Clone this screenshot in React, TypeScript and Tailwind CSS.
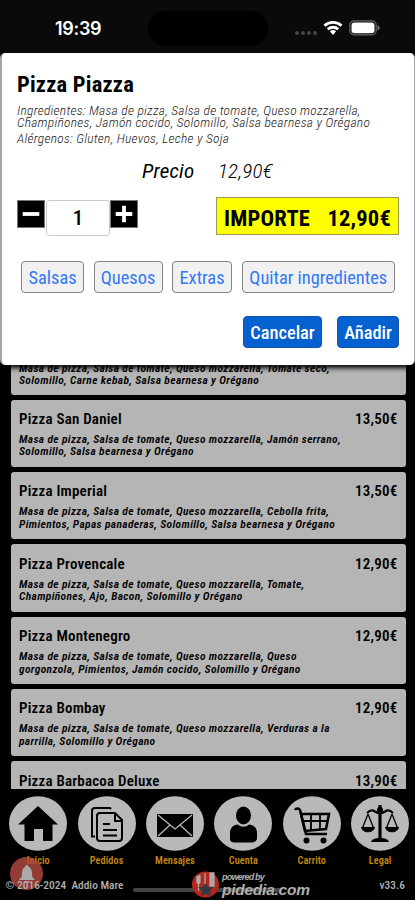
import type { ReactNode } from "react";
import clsx from "clsx";

type Pizza = { name: string; price: string; lines: string[] };

const pizzas: Pizza[] = [
  {
    name: "Pizza San Daniel",
    price: "13,50€",
    lines: ["Masa de pizza, Salsa de tomate, Queso mozzarella, Jamón serrano,", "Solomillo, Salsa bearnesa y Orégano"],
  },
  {
    name: "Pizza Imperial",
    price: "13,50€",
    lines: ["Masa de pizza, Salsa de tomate, Queso mozzarella, Cebolla frita,", "Pimientos, Papas panaderas, Solomillo, Salsa bearnesa y Orégano"],
  },
  {
    name: "Pizza Provencale",
    price: "12,90€",
    lines: ["Masa de pizza, Salsa de tomate, Queso mozzarella, Tomate,", "Champiñones, Ajo, Bacon, Solomillo y Orégano"],
  },
  {
    name: "Pizza Montenegro",
    price: "12,90€",
    lines: ["Masa de pizza, Salsa de tomate, Queso mozzarella, Queso", "gorgonzola, Pimientos, Jamón cocido, Solomillo y Orégano"],
  },
  {
    name: "Pizza Bombay",
    price: "12,90€",
    lines: ["Masa de pizza, Salsa de tomate, Queso mozzarella, Verduras a la", "parrilla, Solomillo y Orégano"],
  },
  { name: "Pizza Barbacoa Deluxe", price: "13,90€", lines: [] },
];

function StatusBar() {
  return (
    <header className="flex h-14 shrink-0 bg-[#0a0a0a]">
      <div className="w-[148px] pt-[18px] pl-[55px] font-['Inter',sans-serif] text-[18px] leading-[22px] font-semibold tracking-[-0.3px] text-white">
        19:39
      </div>
      <div className="mt-[11px] h-[35px] w-[120px] rounded-full bg-black" />
      <div className="flex pl-[27px]">
        <div className="mt-[31px] flex gap-[2.5px]">
          {[0, 1, 2, 3].map((i) => (
            <i key={i} className="size-[3.5px] rounded-full bg-[#464646]" />
          ))}
        </div>
        <svg className="mt-[20px] ml-[6px]" width="20" height="16" viewBox="0 0 20 16" fill="none" stroke="#fff" strokeWidth="2.9">
          <path d="M1.5 5.7C6.2 1.3 13.8 1.3 18.5 5.7" />
          <path d="M4.8 9.3C7.7 6.6 12.3 6.6 15.2 9.3" />
          <path d="M6.9 11.3a4.6 4.6 0 0 1 6.2 0L10 14.9z" fill="#fff" stroke="none" />
        </svg>
        <svg className="mt-[20px] ml-[6px]" width="32" height="16" viewBox="0 0 32 16">
          <rect x=".8" y=".8" width="26.4" height="14" rx="4.4" fill="none" stroke="#686868" strokeWidth="1.2" />
          <rect x="2.5" y="2.4" width="23" height="10.8" rx="3" fill="#fff" />
          <path d="M28.5 5.3c2.8.6 2.8 4.4 0 5z" fill="#777" />
        </svg>
      </div>
    </header>
  );
}

function PizzaCard({ name, price, lines }: Pizza) {
  return (
    <article className="h-[67.4px] shrink-0 rounded-[3px] bg-[#b5b5b5] pt-[10.4px] pr-[8px] pl-[8px] text-black">
      <div className="flex justify-between text-[15px] leading-[18px] font-semibold tracking-[0.2px]">
        <h2>{name}</h2>
        <span>{price}</span>
      </div>
      <div className="mt-[5px] text-[11.5px] leading-[12.5px] font-semibold tracking-[0.35px] whitespace-nowrap italic">
        {lines.map((line) => (
          <p key={line}>{line}</p>
        ))}
      </div>
    </article>
  );
}

function StepButton({ plus }: { plus?: boolean }) {
  return (
    <button className="flex size-[28px] items-center justify-center border border-[#777] bg-black">
      <svg width="18" height="18" viewBox="0 0 18 18" stroke="#fff" strokeWidth="3.8">
        <path d={plus ? "M.7 9h16.6M9 .7v16.6" : "M.7 9h16.6"} />
      </svg>
    </button>
  );
}

function OptionButton({ children, className }: { children: ReactNode; className: string }) {
  return (
    <button
      className={clsx(
        "h-[32px] rounded-[4px] border border-[#858585] bg-[#f1f1f1] text-[18.4px] leading-[32px] whitespace-nowrap text-[#3478f6]",
        className,
      )}
    >
      {children}
    </button>
  );
}

function OrderDialog() {
  return (
    <section className="absolute top-[53px] left-0 h-[311.5px] w-[415px] rounded-[5px] border-r border-l-2 border-[#a5a5a5] bg-white px-[15px] pt-[17.5px] text-black shadow-[0_2px_5px_1px_#000]">
      <h1 className="text-[22.5px] leading-[26px] font-bold tracking-[0.2px]">Pizza Piazza</h1>
      <div className="mt-[7.5px] text-[13.5px] leading-[12px] font-light tracking-[0.25px] whitespace-nowrap text-[#222] italic">
        <p>Ingredientes: Masa de pizza, Salsa de tomate, Queso mozzarella,</p>
        <p>Champiñones, Jamón cocido, Solomillo, Salsa bearnesa y Orégano</p>
        <p className="mt-[4px]">Alérgenos: Gluten, Huevos, Leche y Soja</p>
      </div>
      <div className="mt-[14px] flex text-[21px] leading-[26px] italic">
        <span className="ml-[125px] w-[76px] font-normal tracking-[0.2px]">Precio</span>
        <span className="font-light tracking-[0.2px]">12,90€</span>
      </div>
      <div className="mt-[13px] flex">
        <div className="flex pt-[3px]">
          <StepButton />
          <div className="ml-px h-[36px] w-[64px] rounded-[3px] border border-[#ccc] text-center text-[21px] leading-[35px] font-medium">1</div>
          <StepButton plus />
        </div>
        <div className="ml-[78px] flex h-[38px] w-[183px] justify-between border border-[#999950] bg-[#ff0] pr-[7px] pl-[7px] text-[22.5px] leading-[40px] font-bold tracking-[0.2px]">
          <span>IMPORTE</span>
          <span>12,90€</span>
        </div>
      </div>
      <div className="mt-[25px] ml-[4px] flex">
        <OptionButton className="w-[63px]">Salsas</OptionButton>
        <OptionButton className="ml-[9.5px] w-[69px]">Quesos</OptionButton>
        <OptionButton className="ml-[9.5px] w-[60px]">Extras</OptionButton>
        <OptionButton className="ml-[9.5px] w-[153.5px]">Quitar ingredientes</OptionButton>
      </div>
      <div className="mt-[23px] flex justify-end gap-[15px] text-[18.4px] leading-[32px] font-medium text-white">
        <button className="h-[32px] w-[79px] rounded-[4px] border border-[#1756a8] bg-[#0560d0]">Cancelar</button>
        <button className="h-[32px] w-[62px] rounded-[4px] border border-[#1756a8] bg-[#0560d0]">Añadir</button>
      </div>
    </section>
  );
}

function NavItem({ label, children }: { label: string; children: ReactNode }) {
  return (
    <div className="flex w-[68.4px] flex-col items-center">
      <svg width="58" height="55" viewBox="0 0 58 55" fill="none" stroke="#000" strokeWidth="1.8">
        <ellipse cx="29" cy="27.5" rx="29" ry="27.3" fill="#b9b9b9" stroke="none" />
        {children}
      </svg>
      <span className="mt-[3px] text-[10.2px] leading-[13px] font-semibold tracking-[0.1px] text-[#c48710]">{label}</span>
    </div>
  );
}

function BottomNav() {
  return (
    <nav className="flex pt-[7px] pl-[4px]">
      <NavItem label="Inicio">
        <path d="M9 28.5 29 10l20 18.500h-5.500V45H34V33h-9v12h-9.500V28.500z" fill="#000" stroke="none" />
      </NavItem>
      <NavItem label="Pedidos">
        <g strokeWidth="2">
          <path d="M17 40.500h-3V15q0-3 3-3h15l1 1" />
          <path d="M22 17h15l7 7v18q0 3-3 3H22q-3 0-3-3V20q0-3 3-3z" fill="#b9b9b9" />
          <path d="M37 17v8h7" />
          <path d="M25 28h7M25 34h14M25 39.500h14" />
        </g>
      </NavItem>
      <NavItem label="Mensajes">
        <rect x="11" y="18" width="36" height="23" fill="#000" stroke="none" />
        <path d="m12 19 17 14 17-14M12 40l12-11M46 40 34 29" stroke="#b9b9b9" strokeWidth="1.300" />
      </NavItem>
      <NavItem label="Cuenta">
        <ellipse cx="29.500" cy="19.500" rx="7.500" ry="9" fill="#000" stroke="none" />
        <path d="M16 43v-6c0-5 3-8 8-8.500 3.500 3 7.500 3 11 0 5 .5 8 3.500 8 8.500v6c-1 3-4 3.500-6 3.500H22c-3 0-6-.5-6-3.500z" fill="#000" stroke="none" />
      </NavItem>
      <NavItem label="Carrito">
        <path d="M12 14c1-2 4-2 5 0l6 24h21" strokeWidth="2.500" />
        <path d="M18 18h28l-3 15-21 2z" strokeWidth="2.500" />
        <path d="M20 25h25M28 18v16M37 18v15" strokeWidth="1.800" />
        <circle cx="23.500" cy="44.500" r="3" fill="#000" stroke="none" />
        <circle cx="40.500" cy="44.500" r="3" fill="#000" stroke="none" />
      </NavItem>
      <NavItem label="Legal">
        <path d="M29 9v34" strokeWidth="3.200" />
        <path d="M16 17c3-3 6-3 8-1.500 3 2 7 2 10 0 2-1.500 5-1.500 8 1.500" strokeWidth="2.200" />
        <circle cx="29" cy="14" r="3" fill="#000" stroke="none" />
        <path d="m17 18-5.500 14M17 18l5.500 14M41 18l-5.500 14M41 18l5.500 14" strokeWidth="1.300" />
        <path d="M10 31h14c-1 7-13 7-14 0zM34 31h14c-1 7-13 7-14 0zM20 46c1-3 4-4 9-4s8 1 9 4z" fill="#000" stroke="none" />
      </NavItem>
    </nav>
  );
}

function FooterInfo() {
  return (
    <div className="relative flex h-[33px] text-[11.4px] leading-[16px] font-medium text-[#b0b0b0]">
      <div className="absolute -top-[10px] left-[10px] flex size-[33px] items-center justify-center rounded-full bg-[#b64b42]/80">
        <svg width="16" height="20" viewBox="0 0 16 20" fill="#aaa">
          <path d="M8 1c1.200 0 1.500 1 1.500 1.800C12 4 13 6 13 9c0 4 1 5 2.500 6v1H.5v-1C2 14 3 13 3 9c0-3 1-5 3.500-6.200C6.500 2 6.800 1 8 1zM5.500 17h5c-1 2.500-4 2.500-5 0z" />
        </svg>
      </div>
      <span className="absolute top-[10px] left-[5.5px] whitespace-pre">© 2016-2024  Addio Mare</span>
      <div className="absolute top-[21px] left-[133px] h-[4px] w-[148px] rounded-full bg-[#454545]" />
      <svg className="absolute top-[4px] left-[192px]" width="28" height="27" viewBox="0 0 28 27">
        <ellipse cx="13.500" cy="13.500" rx="13.500" ry="13" fill="#b7271d" />
        <path d="M5 5v6c0 2 3 2 3 0V4M6.500 11v9M13 2v11M18 2h4v13h-4z" fill="#aaa" stroke="#aaa" strokeWidth="1.300" />
        <path d="m14 12 2.500 4h5l-3.500 4 1 5-5-2-5 2 1-5-4-4h5z" fill="#333b40" />
      </svg>
      <div className="absolute top-[5px] left-[222px] font-['Liberation_Sans',sans-serif] italic">
        <p className="text-[9px] leading-[10px] font-bold tracking-[-0.8px]">powered by</p>
        <p className="text-[15.5px] leading-[15px] font-bold tracking-[-0.25px]">pidedia.com</p>
      </div>
      <span className="absolute top-[10px] right-[10px] text-[11.5px]">v33.6</span>
    </div>
  );
}

export default function App() {
  return (
    <div className="relative flex h-[900px] w-[415px] flex-col overflow-hidden bg-black font-['Roboto_Condensed','Roboto',sans-serif]">
      <StatusBar />
      <main className="flex h-[733px] shrink-0 flex-col gap-[5px] overflow-hidden pr-[9.5px] pl-[11px]">
        <article className="h-[338.5px] shrink-0 rounded-[3px] bg-[#b5b5b5] pt-[305.5px] pl-[8px] text-[11.5px] leading-[12.5px] font-semibold tracking-[0.35px] whitespace-nowrap text-black italic">
          <p>Masa de pizza, Salsa de tomate, Queso mozzarella, Tomate seco,</p>
          <p>Solomillo, Carne kebab, Salsa bearnesa y Orégano</p>
        </article>
        {pizzas.map((pizza) => (
          <PizzaCard key={pizza.name} {...pizza} />
        ))}
      </main>
      <footer className="h-[111px] shrink-0">
        <BottomNav />
        <FooterInfo />
      </footer>
      <OrderDialog />
    </div>
  );
}
